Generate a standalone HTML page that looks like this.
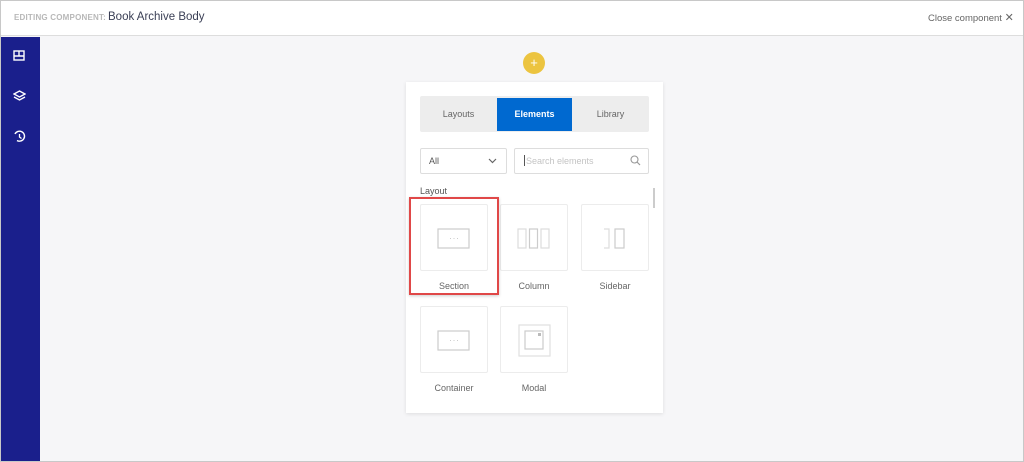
<!DOCTYPE html><html><head><style>
*{margin:0;padding:0;box-sizing:border-box}
body{width:1024px;height:462px;overflow:hidden;background:#f6f6f8;font-family:"Liberation Sans",sans-serif;position:relative}
.a{position:absolute}
.card{position:absolute;width:68px;height:67px;background:#fff;border:1px solid #ececec;border-radius:2px}
.lbl{position:absolute;width:68px;text-align:center;font-size:9px;color:#666}
</style></head><body>
<div class="a" style="left:0;top:0;width:1024px;height:462px;border:1px solid #c8c8c8"></div>
<div class="a" style="left:1px;top:1px;width:1022px;height:35px;background:#fff;border-bottom:1px solid #ddd"></div>
<div class="a" style="left:14px;top:13px;font-size:8px;font-weight:bold;color:#b8b8b8;letter-spacing:.2px">EDITING COMPONENT:</div>
<div class="a" style="left:108px;top:11px;font-size:11.5px;color:#3a3f55">Book Archive Body</div>
<div class="a" style="left:928px;top:11px;font-size:9.5px;color:#666">Close component <span style="font-size:11px">✕</span></div>
<div class="a" style="left:1px;top:37px;width:39px;height:424px;background:#1a1f8c"></div>
<svg class="a" style="left:13px;top:50px" width="13" height="12"><rect x="1" y="1" width="10" height="9" fill="none" stroke="#fff" stroke-width="1.4"/><path d="M1 6H11M6 1V6" stroke="#fff" stroke-width="1.4"/></svg>
<svg class="a" style="left:13px;top:90px" width="13" height="12"><path d="M6.5 1L12 4 6.5 7 1 4Z" fill="none" stroke="#fff" stroke-width="1.3"/><path d="M1 7L6.5 10 12 7" fill="none" stroke="#fff" stroke-width="1.3"/></svg>
<svg class="a" style="left:13px;top:130px" width="13" height="13"><path d="M2 4A5 5 0 1 1 4 10.5" fill="none" stroke="#fff" stroke-width="1.4"/><path d="M6.5 4V7L8.5 8.5" fill="none" stroke="#fff" stroke-width="1.3"/></svg>
<div class="a" style="left:523px;top:52px;width:22px;height:22px;border-radius:50%;background:#ecc440;color:#fff;font-size:13px;text-align:center;line-height:21px">+</div>
<div class="a" style="left:406px;top:82px;width:257px;height:331px;background:#fff;box-shadow:0 1px 4px rgba(0,0,0,.1)"></div>
<div class="a" style="left:420px;top:96px;width:229px;height:36px;background:#ededed;border-radius:2px"></div>
<div class="a" style="left:497px;top:98px;width:75px;height:33px;background:#0069d0"></div>
<div class="a" style="left:420px;top:109px;width:77px;text-align:center;font-size:9px;color:#666">Layouts</div>
<div class="a" style="left:497px;top:109px;width:75px;text-align:center;font-size:9px;color:#fff;font-weight:bold">Elements</div>
<div class="a" style="left:572px;top:109px;width:77px;text-align:center;font-size:9px;color:#666">Library</div>
<div class="a" style="left:420px;top:148px;width:87px;height:26px;border:1px solid #ddd;border-radius:2px"></div>
<div class="a" style="left:429px;top:156px;font-size:9px;color:#555">All</div>
<svg class="a" style="left:488px;top:158px" width="9" height="6"><path d="M1 1L4.5 4.5 8 1" fill="none" stroke="#666" stroke-width="1.2"/></svg>
<div class="a" style="left:514px;top:148px;width:135px;height:26px;border:1px solid #ddd;border-radius:2px"></div>
<div class="a" style="left:524px;top:155px;width:1px;height:11px;background:#555"></div>
<div class="a" style="left:526px;top:156px;font-size:9px;color:#c4c4c4">Search elements</div>
<svg class="a" style="left:630px;top:155px" width="11" height="11"><circle cx="4.5" cy="4.5" r="3.5" fill="none" stroke="#999" stroke-width="1.1"/><path d="M7 7L10 10" stroke="#999" stroke-width="1.2"/></svg>
<div class="a" style="left:420px;top:186px;font-size:9px;color:#555">Layout</div>
<div class="a" style="left:653px;top:188px;width:2px;height:20px;background:#ccc"></div>
<div class="card" style="left:420px;top:204px"></div>
<div class="card" style="left:500px;top:204px"></div>
<div class="card" style="left:581px;top:204px"></div>
<div class="card" style="left:420px;top:306px"></div>
<div class="card" style="left:500px;top:306px"></div>
<div class="lbl" style="left:420px;top:281px">Section</div>
<div class="lbl" style="left:500px;top:281px">Column</div>
<div class="lbl" style="left:581px;top:281px">Sidebar</div>
<div class="lbl" style="left:420px;top:383px">Container</div>
<div class="lbl" style="left:500px;top:383px">Modal</div>
<svg class="a" style="left:437px;top:228px" width="34" height="22"><rect x="1" y="1" width="31" height="19" fill="none" stroke="#ccc" stroke-width="1.2"/><path d="M13 10.5h1M16.5 10.5h1M20 10.5h1" stroke="#ccc"/></svg>
<svg class="a" style="left:517px;top:228px" width="34" height="22"><rect x="1" y="1" width="8" height="19" fill="none" stroke="#ddd" stroke-width="1.2"/><rect x="12.5" y="1" width="8" height="19" fill="none" stroke="#ccc" stroke-width="1.2"/><rect x="24" y="1" width="8" height="19" fill="none" stroke="#ddd" stroke-width="1.2"/></svg>
<svg class="a" style="left:603px;top:228px" width="24" height="22"><path d="M1 1H6V20H1" fill="none" stroke="#ddd" stroke-width="1.2"/><rect x="12" y="1" width="9" height="19" fill="none" stroke="#ccc" stroke-width="1.2"/></svg>
<svg class="a" style="left:437px;top:330px" width="34" height="22"><rect x="1" y="1" width="31" height="19" fill="none" stroke="#ccc" stroke-width="1.2"/><path d="M13 10.5h1M16.5 10.5h1M20 10.5h1" stroke="#ccc"/></svg>
<svg class="a" style="left:518px;top:324px" width="33" height="33"><rect x="1" y="1" width="31" height="31" fill="none" stroke="#e0e0e0" stroke-width="1.2"/><rect x="7" y="7" width="18" height="18" fill="none" stroke="#ccc" stroke-width="1.2"/><rect x="20" y="9" width="3" height="3" fill="#bbb"/></svg>
<div class="a" style="left:409px;top:197px;width:90px;height:98px;border:2px solid #e04848;box-shadow:0 1px 3px rgba(0,0,0,.2)"></div>
</body></html>
